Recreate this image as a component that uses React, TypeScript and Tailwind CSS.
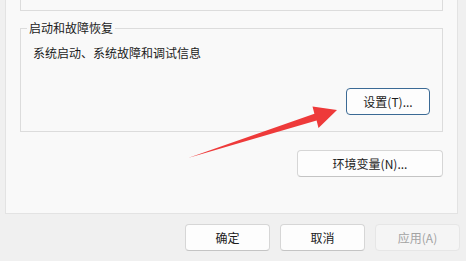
import React from 'react';

const FONT = "font-['Noto_Sans_CJK_SC',sans-serif]";

function DlgButton({
  label,
  width,
  focused,
  disabled,
}: {
  label: string;
  width: string;
  focused?: boolean;
  disabled?: boolean;
}) {
  const tone = disabled
    ? 'bg-[#f5f5f5] border-[#e6e6e6] text-[#a3a3a3]'
    : focused
      ? 'bg-[#fdfdfd] border-[#3b6a95] text-[#1b1b1b]'
      : 'bg-[#fdfdfd] border-[#d6d6d6] border-b-[#c4c4c4] text-[#1b1b1b]';
  return (
    <div
      className={`${width} h-[27px] flex items-center justify-center rounded-[4px] border text-[12px] leading-none ${tone}`}
    >
      {label}
    </div>
  );
}

export default function App() {
  return (
    <div className={`relative w-[466px] h-[261px] overflow-hidden bg-[#f0f0f0] ${FONT}`}>
      {/* tab page */}
      <div className="ml-[5px] w-[453px] h-[214px] border-x border-b border-[#e3e3e3] bg-[#f9f9f9] px-[14px]">
        {/* previous group, cut off at the top */}
        <div className="h-[11px] border-x border-b border-[#dcdcdc]" />

        <fieldset className="mt-[9px] h-[112px] border border-[#dcdcdc] px-[12px] pb-0">
          <legend className="ml-[-6px] px-[2px] text-[12px] leading-[16px] text-[#1b1b1b]">
            启动和故障恢复
          </legend>
          <p className="mt-[9px] text-[12px] leading-[16px] text-[#1b1b1b]">
            系统启动、系统故障和调试信息
          </p>
          <div className="mt-[27px] flex justify-end pr-[-1px]">
            <DlgButton label="设置(T)..." width="w-[84px]" focused />
          </div>
        </fieldset>

        <div className="mt-[18px] flex justify-end">
          <DlgButton label="环境变量(N)..." width="w-[146px]" />
        </div>
      </div>

      {/* dialog buttons */}
      <div className="mt-[10px] ml-[185px] flex gap-[10px]">
        <DlgButton label="确定" width="w-[85px]" />
        <DlgButton label="取消" width="w-[85px]" />
        <DlgButton label="应用(A)" width="w-[85px]" disabled />
      </div>

      {/* red annotation arrow */}
      <svg className="pointer-events-none absolute left-0 top-0" width="466" height="261" viewBox="0 0 466 261">
        <polygon
          points="188,158 314.4,113.8 312.5,106.5 337,110 318.5,128 316.6,120.6"
          fill="#ee3a3a"
        />
      </svg>
    </div>
  );
}
